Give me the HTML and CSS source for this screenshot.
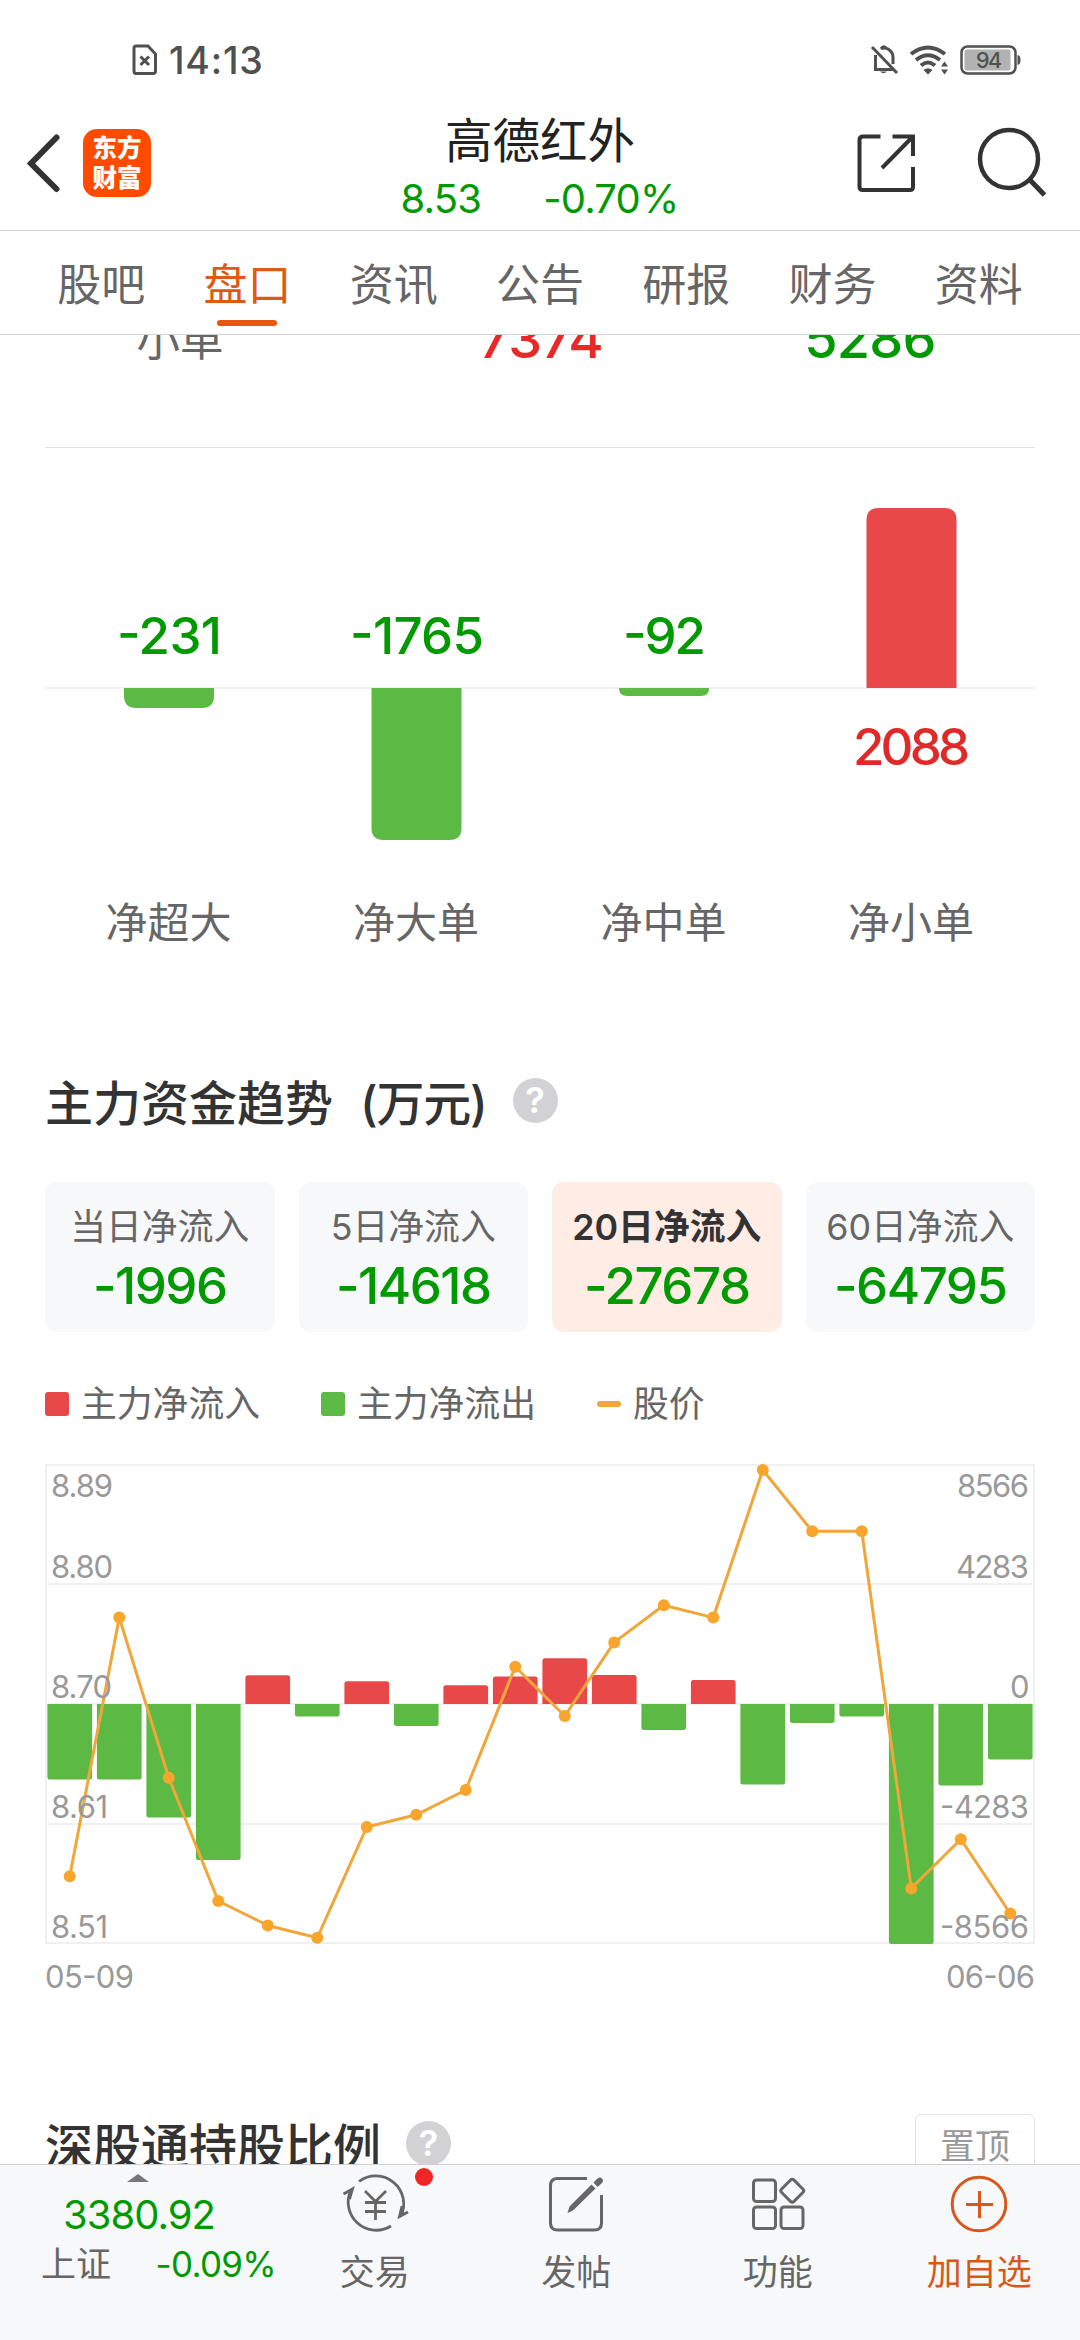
FILE: index.html
```html
<!DOCTYPE html>
<html lang="zh-CN">
<head>
<meta charset="utf-8">
<title>高德红外</title>
<link rel="stylesheet" href="styles.css">
</head>
<body>
<div class="status">
  <svg class="sim" width="26" height="32" viewBox="0 0 26 32"><path d="M4 2H16L23.500 10V27Q23.500 29.500 21 29.500H4Q2 29.500 2 27V4Q2 2 4 2Z" fill="none" stroke="#505050" stroke-width="3"/><path d="M8.500 12.500L17 21M17 12.500L8.500 21" stroke="#505050" stroke-width="3"/></svg>
  <span class="time">14:13</span>
  <svg class="sys" width="152" height="34" viewBox="0 0 152 34">
    <g fill="none" stroke="#505050" stroke-width="3">
      <path d="M2 4L27 30"/><path d="M5.500 12V26.500H24M11 6Q14 4 18 6Q23 9 23 14V21"/>
    </g>
    <path d="M9.500 5.500Q13 0 17 4ZM10 28.500H17Q13.500 32 10 28.500Z" fill="#505050"/>
    <g fill="none" stroke="#505050" stroke-width="4">
      <path d="M41 11Q58 -2 75 11"/><path d="M46 17Q58 7.500 70 17"/><path d="M51 22.500Q58 16.500 65 22.500"/>
    </g>
    <path d="M53.500 27Q58 23.500 62.500 27L58 31.500ZM71 23.500L74.500 18.500L78 23.500ZM71 26.500H78L74.500 31.500Z" fill="#505050"/>
    <rect x="91.500" y="3.500" width="54" height="27" rx="6" fill="#fff" stroke="#505050" stroke-width="2.500"/>
    <rect x="94.500" y="6.500" width="46" height="21" rx="2.500" fill="#b2b2b2"/>
    <path d="M147.500 12Q150.500 12.500 150.500 17T147.500 22Z" fill="#505050"/>
    <text x="106" y="24.500" textLength="26" class="batt">94</text>
  </svg>
</div>
<header class="header">
  <svg class="back" width="36" height="60" viewBox="0 0 36 60"><path d="M31.500 4.500L6 30.500L31.500 56" fill="none" stroke="#333" stroke-width="6" stroke-linecap="round"/></svg>
  <div class="logo"><span>东方</span><span>财富</span></div>
  <div class="stock">
    <div class="name">高德红外</div>
    <div class="quote"><span>8.53</span><span>-0.70%</span></div>
  </div>
  <svg class="share" width="60" height="60" viewBox="0 0 60 60" fill="none" stroke="#333" stroke-width="4"><path d="M24.500 3.500H7Q3.500 3.500 3.500 7V54Q3.500 57 7 57H54Q57 57 57 54V34M36.500 3.500H57V23M56 4.500L26 35"/></svg>
  <svg class="search" width="72" height="74" viewBox="0 0 72 74" fill="none" stroke="#333" stroke-width="4.500"><circle cx="33" cy="33" r="29"/><path d="M54 54L68.500 69" stroke-width="5"/></svg>
</header>
<nav class="tabs">
  <span>股吧</span><span class="on">盘口</span><span>资讯</span><span>公告</span><span>研报</span><span>财务</span><span>资料</span>
</nav>
<main class="content">
  <div class="row"><span class="label">小单</span><span class="in">7374</span><span class="out">5286</span></div>
  <svg class="net" width="990" height="510" viewBox="0 0 990 510">
    <path d="M0 0.500H990" stroke="#e2e2e2" stroke-width="1"/>
    <path d="M0 241H990" stroke="#f0f0f0" stroke-width="2"/>
    <g fill="#5cba44">
      <path d="M79 241h90v8q0 12-12 12h-66q-12 0-12-12z"/>
      <path d="M326.500 241h90v140q0 12-12 12h-66q-12 0-12-12z"/>
      <path d="M574 241h90q0 8-8 8h-74q-8 0-8-8z"/>
    </g>
    <path d="M821.500 241h90v-168q0-12-12-12h-66q-12 0-12 12z" fill="#e84848"/>
    <g class="val">
      <text x="72" y="207" textLength="105">-231</text>
      <text x="305" y="207" textLength="134">-1765</text>
      <text x="578" y="207" textLength="83">-92</text>
      <text x="808" y="318" textLength="117" class="red">2088</text>
    </g>
    <g class="cat">
      <text x="123.500" y="491">净超大</text><text x="371" y="491">净大单</text><text x="618.500" y="491">净中单</text><text x="866" y="491">净小单</text>
    </g>
  </svg>
  <div class="title t1"><h2>主力资金趋势<span class="unit">(万元)</span></h2><i class="help">?</i></div>
  <div class="cards">
    <div class="card"><span>当日净流入</span><b>-1996</b></div>
    <div class="card"><span>5日净流入</span><b>-14618</b></div>
    <div class="card on"><span>20日净流入</span><b>-27678</b></div>
    <div class="card"><span>60日净流入</span><b>-64795</b></div>
  </div>
  <div class="legend">
    <span class="k1"><i></i>主力净流入</span><span class="k2"><i></i>主力净流出</span><span class="k3"><i></i>股价</span>
  </div>
  <svg class="trend" width="990" height="540" viewBox="45 1464 990 540">
    <path d="M46 1465H1034V1943H46ZM46 1584H1034M46 1704H1034M46 1824H1034" fill="none" stroke="#f0f0f0" stroke-width="2"/>
    <g fill="#5cba44">
      <path d="M47.400 1704h44.700v73q0 2.500-2.500 2.500h-39.700q-2.500 0-2.500-2.500z"/>
      <path d="M96.900 1704h44.700v73q0 2.500-2.500 2.500h-39.700q-2.500 0-2.500-2.500z"/>
      <path d="M146.400 1704h44.700v111q0 2.500-2.500 2.500h-39.700q-2.500 0-2.500-2.500z"/>
      <path d="M195.900 1704h44.700v153.500q0 2.500-2.500 2.500h-39.700q-2.500 0-2.500-2.500z"/>
      <path d="M294.900 1704h44.700v10q0 2.500-2.500 2.500h-39.700q-2.500 0-2.500-2.500z"/>
      <path d="M393.900 1704h44.700v19.500q0 2.500-2.500 2.500h-39.700q-2.500 0-2.500-2.500z"/>
      <path d="M641.400 1704h44.700v23.500q0 2.500-2.500 2.500h-39.700q-2.500 0-2.500-2.500z"/>
      <path d="M740.400 1704h44.700v78q0 2.500-2.500 2.500h-39.700q-2.500 0-2.500-2.500z"/>
      <path d="M789.900 1704h44.700v16.500q0 2.500-2.500 2.500h-39.700q-2.500 0-2.500-2.500z"/>
      <path d="M839.400 1704h44.700v10q0 2.500-2.500 2.500h-39.700q-2.500 0-2.500-2.500z"/>
      <path d="M888.900 1704h44.700v237.500q0 2.500-2.500 2.500h-39.700q-2.500 0-2.500-2.500z"/>
      <path d="M938.400 1704h44.700v79q0 2.500-2.500 2.500h-39.700q-2.500 0-2.500-2.500z"/>
      <path d="M987.900 1704h44.700v53q0 2.500-2.500 2.500h-39.700q-2.500 0-2.500-2.500z"/>
    </g>
    <g fill="#e84848">
      <path d="M245.400 1704h44.700v-26.200q0-2.500-2.500-2.500h-39.700q-2.500 0-2.500 2.500z"/>
      <path d="M344.400 1704h44.700v-20.300q0-2.500-2.500-2.500h-39.700q-2.500 0-2.500 2.500z"/>
      <path d="M443.400 1704h44.700v-16.200q0-2.500-2.500-2.500h-39.700q-2.500 0-2.500 2.500z"/>
      <path d="M492.900 1704h44.700v-25q0-2.500-2.500-2.500h-39.700q-2.500 0-2.500 2.500z"/>
      <path d="M542.400 1704h44.700v-43.200q0-2.500-2.500-2.500h-39.700q-2.500 0-2.500 2.500z"/>
      <path d="M591.900 1704h44.700v-26.500q0-2.500-2.500-2.500h-39.700q-2.500 0-2.500 2.500z"/>
      <path d="M690.900 1704h44.700v-21.500q0-2.500-2.500-2.500h-39.700q-2.500 0-2.500 2.500z"/>
    </g>
    <defs><marker id="dot" markerUnits="userSpaceOnUse" markerWidth="14" markerHeight="14" refX="7" refY="7"><circle cx="7" cy="7" r="6" fill="#f8a52c"/></marker></defs>
    <polyline fill="none" stroke="#f0a63a" stroke-width="3" stroke-linejoin="round" marker-start="url(#dot)" marker-mid="url(#dot)" marker-end="url(#dot)" points="69.750,1876.200 119.250,1617.600 168.750,1777.800 218.250,1901 267.750,1925.500 317.250,1937.800 366.750,1827 416.250,1814.800 465.750,1790 515.250,1666.800 564.750,1716 614.250,1642.400 663.750,1605.200 713.250,1617.600 762.750,1470 812.250,1531.200 861.750,1531.200 911.250,1888.400 960.750,1839.200 1010.250,1913.500"/>
    <g class="axis">
      <text x="51" y="1497" textLength="62">8.89</text><text x="51" y="1577.500" textLength="62">8.80</text><text x="51" y="1697.500" textLength="61">8.70</text><text x="51" y="1817.500" textLength="57">8.61</text><text x="51" y="1937.500" textLength="57">8.51</text>
      <text x="957" y="1497" textLength="72">8566</text><text x="956" y="1577.500" textLength="73">4283</text><text x="1010" y="1697.500">0</text><text x="940" y="1817.500" textLength="89">-4283</text><text x="940" y="1937.500" textLength="89">-8566</text>
      <text x="45" y="1988" textLength="89">05-09</text><text x="946" y="1988" textLength="89">06-06</text>
    </g>
  </svg>
  <div class="title t2"><h2>深股通持股比例</h2><i class="help">?</i><span class="pin">置顶</span></div>
</main>
<footer class="bar">
  <div class="index">
    <svg width="22" height="8" viewBox="0 0 22 8"><path d="M0 8L11 0L22 8Z" fill="#77777a"/></svg>
    <div class="point">3380.92</div>
    <div class="sh"><span>上证</span><em>-0.09%</em></div>
  </div>
  <div class="act">
    <svg width="68" height="62" viewBox="0 0 68 62" fill="none" stroke="#666" stroke-width="2.800"><path d="M18 8.500A28 28 0 0 1 60 43M67 39L58.500 43.500L61 33M50 53A28 28 0 0 1 10 17M2.500 21L11.500 16L8.500 26"/><path d="M24 18L34.500 28.500L45 18M34.500 28.500V47M24 29.500H45M24 38.500H45"/></svg>
    <span>交易</span><i class="badge"></i>
  </div>
  <div class="act">
    <svg width="68" height="62" viewBox="0 0 68 62" fill="none" stroke="#666" stroke-width="3"><path d="M45 5.500H15.500Q8.500 5.500 8.500 12.500V50Q8.500 57 15.500 57H52.500Q59.500 57 59.500 50V22"/><g fill="#666" stroke="none"><path d="M25.500 40L27.500 33.500L49.500 11.500L53.500 15.500L31 37.500ZM51.500 9.500L55.500 5.500Q58 3.500 60 5.500T60 10L55.500 14Z"/></g></svg>
    <span>发帖</span>
  </div>
  <div class="act">
    <svg width="68" height="62" viewBox="0 0 68 62" fill="none" stroke="#666" stroke-width="3"><rect x="9.500" y="7" width="22" height="21.500" rx="3"/><rect x="9.500" y="34" width="22" height="21.500" rx="3"/><rect x="37" y="34" width="22" height="21.500" rx="3"/><rect x="39.500" y="9" width="17.500" height="17.500" rx="2.500" transform="rotate(45 48.250 17.750)"/></svg>
    <span>功能</span>
  </div>
  <div class="act add">
    <svg width="68" height="62" viewBox="0 0 68 62" fill="none" stroke="#d8581a" stroke-width="3"><circle cx="34" cy="31" r="26.800"/><path d="M21 31.500H48M34.500 18V45"/></svg>
    <span>加自选</span>
  </div>
</footer>
</body>
</html>
```
FILE: styles.css
```css
* { box-sizing: border-box; }
body {
  margin: 0;
  width: 1080px;
  height: 2340px;
  display: flex;
  flex-direction: column;
  overflow: hidden;
  background: #fff;
  color: #666;
  font-family: Inter, "Noto Sans CJK SC", sans-serif;
}
svg { display: block; flex: none; }
h2 { margin: 0; }
i, em { font-style: normal; }

.status { height: 120px; padding: 0 58px 0 132px; display: flex; align-items: center; }
.time { margin-left: 11px; font-size: 37.500px; font-weight: 500; letter-spacing: 0.800px; color: #505050; }
.sys { margin-left: auto; }
.batt { font-size: 21.500px; font-weight: 500; fill: #505050; }

.header { height: 111px; padding-bottom: 24px; display: flex; align-items: center; border-bottom: 1px solid #d2d2d2; }
.back { margin-left: 25px; }
.logo {
  width: 68px; height: 68px; margin-left: 22px; padding-top: 4px; border-radius: 14px;
  display: flex; flex-direction: column; align-items: center;
  background: #ff4a00; color: #fff;
  font-size: 24.500px; font-weight: 900; line-height: 30px;
}
.stock { width: 400px; margin-left: 189px; margin-top: 11px; text-align: center; }
.name { font-size: 47.500px; line-height: 60px; color: #222; }
.quote { margin-left: -1px; display: flex; justify-content: center; gap: 62px; font-size: 40px; line-height: 56px; letter-spacing: -0.800px; color: #090; }
.share { margin-left: 116px; }
.search { margin-left: 60px; }

.tabs { height: 104px; flex: none; padding: 0 28px; display: flex; border-bottom: 1px solid #d2d2d2; }
.tabs span { flex: 1; display: flex; flex-direction: column; align-items: center; font-size: 44px; line-height: 90px; padding-top: 9px; }
.tabs .on { color: #de5a14; }
.tabs .on::after { content: ""; width: 60px; height: 6px; margin-top: -10px; border-radius: 3px; background: #e8560e; }

.content { height: 1829px; flex: none; overflow: hidden; padding: 0 45px; }
.row { height: 60px; margin: -26px -45px 78px; padding-left: 15px; display: grid; grid-template-columns: 330px 392px 266px; justify-items: center; line-height: 60px; font-size: 54px; font-weight: 500; letter-spacing: -0.800px; }
.row .label { font-size: 43.500px; font-weight: 400; letter-spacing: 0; line-height: 62px; }
.row .in { color: #e92828; }
.row .out { color: #090; }
.val { font-size: 51px; font-weight: 500; fill: #090; }
.val .red { fill: #e02a2a; }
.cat { font-size: 42px; fill: #666; text-anchor: middle; }

.title { height: 60px; display: flex; align-items: center; }
.title h2 { font-size: 48px; font-weight: 500; line-height: 60px; padding-top: 4px; color: #333; }
.unit { margin-left: 27px; letter-spacing: -1.200px; }
.help { width: 45px; height: 45px; border-radius: 50%; background: #d2d2d5; color: #fff; text-align: center; font-size: 36px; font-weight: 600; line-height: 45px; }
.t1 { margin-top: 115px; }
.t1 .help { margin-left: 26px; margin-top: -3px; }
.t2 { margin-top: 111px; }
.t2 .help { margin-left: 25px; margin-top: -3px; }
.pin { width: 120px; height: 62px; margin-left: auto; border: 1.500px solid #e4e4e4; border-radius: 6px; text-align: center; font-size: 35px; line-height: 62px; color: #999; }

.cards { margin-top: 50px; display: grid; grid-template-columns: repeat(4, 1fr); gap: 24px; }
.card { height: 150px; padding-top: 19px; display: flex; flex-direction: column; align-items: center; border-radius: 12px; background: #f7f8fa; }
.card span { font-size: 35.800px; line-height: 52px; white-space: nowrap; }
.card b { margin-top: 3px; font-size: 51px; font-weight: 500; line-height: 60px; letter-spacing: -1.500px; color: #090; }
.card.on { background: #ffede5; }
.card.on span { color: #333; font-weight: 600; }

.legend { height: 48px; margin-top: 48px; display: flex; align-items: center; font-size: 35.800px; line-height: 46px; }
.legend span { display: flex; align-items: center; gap: 12px; }
.legend i { width: 24px; height: 24px; border-radius: 3px; background: #e84848; }
.legend .k2 { margin-left: 61px; }
.legend .k2 i { background: #5cba44; }
.legend .k3 { margin-left: 61px; }
.legend .k3 i { height: 6px; border-radius: 3px; background: #f0a63a; }
.trend { margin-top: 36px; }
.axis { font-size: 31px; fill: #999; }

.bar { height: 176px; flex: none; display: flex; border-top: 1px solid #cfd0d2; background: #f7f8fa; }
.index { width: 274px; padding-top: 9px; }
.index svg { margin-left: 127px; }
.point { margin-left: 63px; margin-top: 8px; font-size: 40px; line-height: 50px; letter-spacing: -1px; color: #090; }
.sh { margin-left: 41px; width: 235px; display: flex; justify-content: space-between; font-size: 35px; line-height: 48px; }
.sh em { color: #090; letter-spacing: -0.700px; }
.act { position: relative; flex: 1; padding-top: 8px; display: flex; flex-direction: column; align-items: center; font-size: 35px; }
.act span { line-height: 50px; margin-top: 12px; }
.add { color: #d8581a; }
.badge { position: absolute; top: 3px; left: 141px; width: 18px; height: 18px; border-radius: 50%; background: #ee2626; }
```
